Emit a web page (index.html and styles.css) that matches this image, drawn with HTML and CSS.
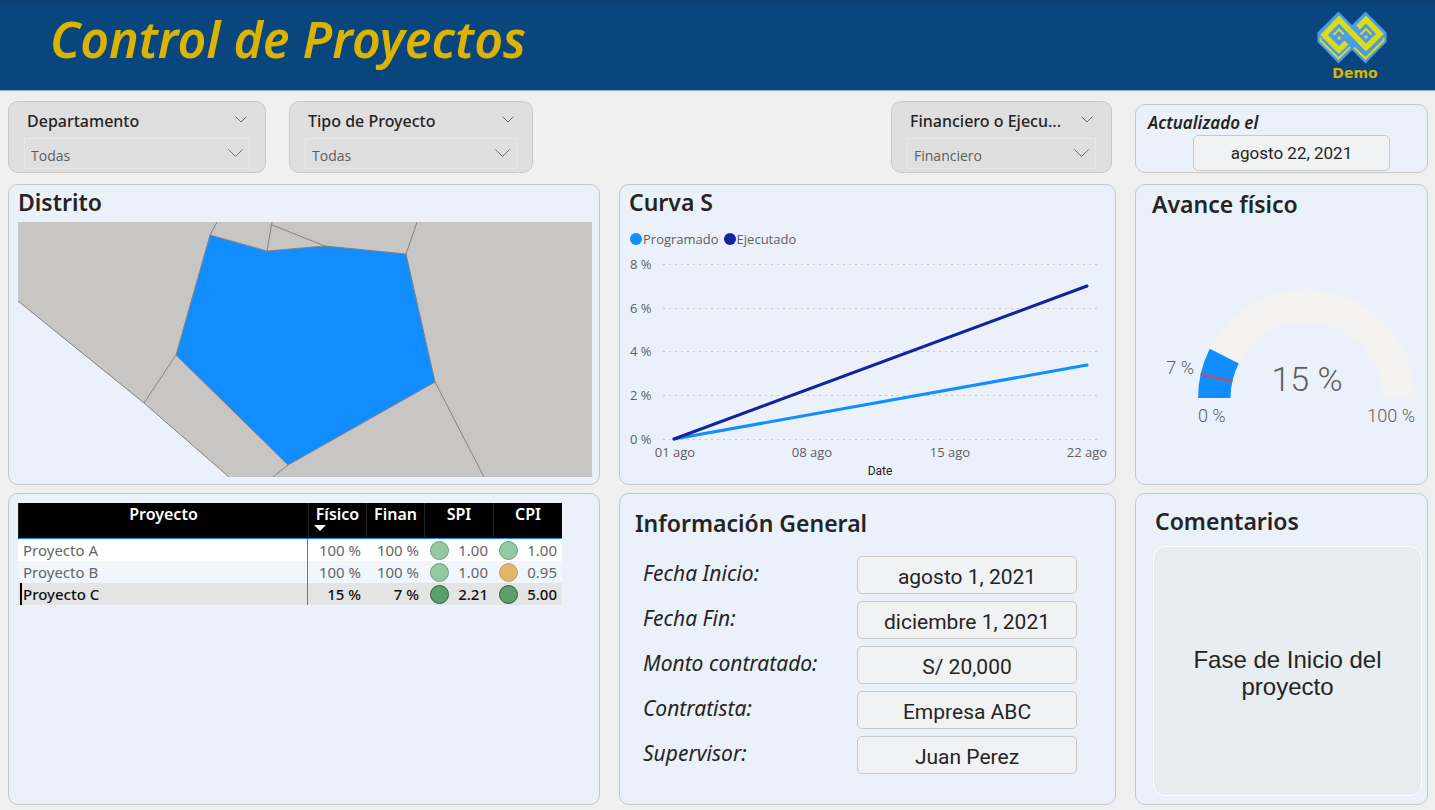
FILE: index.html
```html
<!DOCTYPE html>
<html lang="es">
<head>
<meta charset="utf-8">
<meta name="viewport" content="width=device-width, initial-scale=1">
<title>Control de Proyectos</title>
<link rel="stylesheet" href="styles.css">
</head>
<body>
<header class="topbar">
  <h1 class="topbar-title">Control de Proyectos</h1>
  <div class="brand">
    <svg class="brand-logo" width="70" height="53" viewBox="5 4 70 53" aria-hidden="true">
      <path d="M26.500 4.500 40 18 53.500 4.500 74.500 25.500V35L53.500 56.500 40 43 26.500 56.500 5.500 35V25.500Z" fill="#4a9bea"/>
      <g fill="none" stroke="#dbdc18" stroke-linejoin="miter">
        <path d="M34.500 35.500 27 43 12 28 27 12.500 54 40.500 68 27 54 12.500 46 20.500" stroke-width="5.500"/>
        <path d="M21.500 28 27 22.500 32 27.500M48.500 27.500 54 22 59.500 27.500" stroke-width="2"/>
        <path d="M8.500 31V33.500L26.500 51.500 38 40M42 40.500 53.500 51.500 71.500 33.500V31" stroke-width="2"/>
      </g>
      <path d="M27 29l2 2-2 2-2-2zM54 28l2 2-2 2-2-2z" fill="#dbdc18"/>
    </svg>
    <span class="brand-name">Demo</span>
  </div>
</header>

<main class="page">
  <section class="filters">
    <div class="slicer">
      <div class="slicer-head">
        <label class="slicer-title" for="departamento">Departamento</label>
        <button class="slicer-toggle" type="button" aria-label="Opciones de Departamento"><svg width="12" height="7" viewBox="0 0 12 7"><path class="chev" d="M.5.500 6 6 11.500.500"/></svg></button>
      </div>
      <div class="slicer-field">
        <select class="slicer-select" id="departamento"><option>Todas</option></select>
        <svg class="slicer-arrow" width="15" height="9" viewBox="0 0 15 9"><path class="chev" d="M.5.500 7.500 7.500 14.500.500"/></svg>
      </div>
    </div>
    <div class="slicer">
      <div class="slicer-head">
        <label class="slicer-title" for="tipo">Tipo de Proyecto</label>
        <button class="slicer-toggle" type="button" aria-label="Opciones de Tipo de Proyecto"><svg width="12" height="7" viewBox="0 0 12 7"><path class="chev" d="M.5.500 6 6 11.500.500"/></svg></button>
      </div>
      <div class="slicer-field">
        <select class="slicer-select" id="tipo"><option>Todas</option></select>
        <svg class="slicer-arrow" width="15" height="9" viewBox="0 0 15 9"><path class="chev" d="M.5.500 7.500 7.500 14.500.500"/></svg>
      </div>
    </div>
    <div class="slicer slicer-last">
      <div class="slicer-head">
        <label class="slicer-title" for="modo">Financiero o Ejecu...</label>
        <button class="slicer-toggle" type="button" aria-label="Opciones de Financiero o Ejecutado"><svg width="12" height="7" viewBox="0 0 12 7"><path class="chev" d="M.5.500 6 6 11.500.500"/></svg></button>
      </div>
      <div class="slicer-field">
        <select class="slicer-select" id="modo"><option>Financiero</option></select>
        <svg class="slicer-arrow" width="15" height="9" viewBox="0 0 15 9"><path class="chev" d="M.5.500 7.500 7.500 14.500.500"/></svg>
      </div>
    </div>
    <div class="updated">
      <span class="updated-label">Actualizado el</span>
      <span class="value updated-value">agosto 22, 2021</span>
    </div>
  </section>

  <section class="board">
    <article class="card map-card">
      <h2 class="card-title">Distrito</h2>
      <svg class="map" viewBox="18 222 574 255" role="img" aria-label="Mapa de distritos">
        <path d="M18 222H592V477H229L144 403 18 301Z" fill="#c8c6c4"/>
        <path d="M210 235 267 251 325 246 406 254 435 382 288 465 176 355Z" fill="#118dff"/>
        <path class="border-line" d="M18 301 144 403 229 477M144 403 176 355 210 235 217 222M210 235 267 251 325 246 406 254 417 222M267 251 272 222M272 225 325 246M406 254 435 382 484 477M435 382 288 465 273 477M288 465 176 355"/>
      </svg>
    </article>

    <article class="card chart-card">
      <h2 class="card-title">Curva S</h2>
      <ul class="legend">
        <li class="legend-item"><span class="dot dot-plan"></span>Programado</li>
        <li class="legend-item"><span class="dot dot-real"></span>Ejecutado</li>
      </ul>
      <svg class="chart" viewBox="0 0 495 228" role="img" aria-label="Curva S">
        <path class="grid-line" d="M43 12.500H478M43 56.500H478M43 99.500H478M43 143.500H478M43 187.500H478"/>
        <path d="M54 187 467 113" class="series series-plan"/>
        <path d="M54 187 467 34" class="series series-real"/>
        <g class="tick">
          <text x="10" y="17">8 %</text><text x="10" y="61">6 %</text><text x="10" y="104">4 %</text><text x="10" y="148">2 %</text><text x="10" y="192">0 %</text>
        </g>
        <g class="tick" text-anchor="middle">
          <text x="55" y="205">01 ago</text><text x="192" y="205">08 ago</text><text x="330" y="205">15 ago</text><text x="467" y="205">22 ago</text>
        </g>
        <text class="axis-name" x="260" y="223" text-anchor="middle">Date</text>
      </svg>
    </article>

    <article class="card gauge-card">
      <h2 class="card-title">Avance físico</h2>
      <svg class="gauge" viewBox="0 0 291 250" role="img" aria-label="Avance físico 15 %">
        <path d="M62 164A108.500 108.500 0 0 1 279 164H246.500A76 76 0 0 0 94.500 164Z" fill="#f3f2f1"/>
        <path d="M62 164A108.500 108.500 0 0 1 73.800 114.700L102.800 129.500A76 76 0 0 0 94.500 164Z" fill="#118dff"/>
        <path d="M64.600 140.300 96.300 147.400" stroke="#d64550" stroke-width="2"/>
        <text class="gauge-value" x="171" y="157" text-anchor="middle">15 %</text>
        <text class="gauge-label" x="58" y="140" text-anchor="end">7 %</text>
        <text class="gauge-label" x="62" y="188">0 %</text>
        <text class="gauge-label" x="279" y="188" text-anchor="end">100 %</text>
      </svg>
    </article>

    <article class="card table-card">
      <table class="projects">
        <colgroup><col class="col-name"><col class="col-pct"><col class="col-pct"><col class="col-idx"><col class="col-idx"></colgroup>
        <thead>
          <tr><th>Proyecto</th><th>Físico<span class="sort-mark"></span></th><th>Finan</th><th>SPI</th><th>CPI</th></tr>
        </thead>
        <tbody>
          <tr><td>Proyecto A</td><td>100 %</td><td>100 %</td><td><span class="kpi"><i class="light light-green"></i>1.00</span></td><td><span class="kpi"><i class="light light-green"></i>1.00</span></td></tr>
          <tr><td>Proyecto B</td><td>100 %</td><td>100 %</td><td><span class="kpi"><i class="light light-green"></i>1.00</span></td><td><span class="kpi"><i class="light light-amber"></i>0.95</span></td></tr>
          <tr class="selected"><td>Proyecto C</td><td>15 %</td><td>7 %</td><td><span class="kpi"><i class="light light-strong"></i>2.21</span></td><td><span class="kpi"><i class="light light-strong"></i>5.00</span></td></tr>
        </tbody>
      </table>
    </article>

    <article class="card info-card">
      <h2 class="card-title">Información General</h2>
      <dl class="info">
        <dt>Fecha Inicio:</dt><dd class="value">agosto 1, 2021</dd>
        <dt>Fecha Fin:</dt><dd class="value">diciembre 1, 2021</dd>
        <dt>Monto contratado:</dt><dd class="value">S/ 20,000</dd>
        <dt>Contratista:</dt><dd class="value">Empresa ABC</dd>
        <dt>Supervisor:</dt><dd class="value">Juan Perez</dd>
      </dl>
    </article>

    <article class="card notes-card">
      <h2 class="card-title">Comentarios</h2>
      <p class="note">Fase de Inicio del proyecto</p>
    </article>
  </section>
</main>
</body>
</html>
```

FILE: styles.css
```css
* { box-sizing: border-box; }

body {
  margin: 0;
  min-height: 100vh;
  display: flex;
  flex-direction: column;
  background: #f0f0f0;
  color: #252423;
  font-family: "Noto Sans", "Open Sans", sans-serif;
}

h1, h2, p, ul, dl, dd { margin: 0; padding: 0; }

.topbar {
  display: flex;
  justify-content: space-between;
  align-items: flex-start;
  height: 91px;
  padding: 11px 48px 0 50px;
  background: linear-gradient(#083f70, #09467e 6px);
  border-bottom: 1px solid #94aecb;
}
.topbar-title {
  color: #dbb300;
  font-size: 50px;
  line-height: 56px;
  font-weight: 600;
  font-style: italic;
}
.brand { display: flex; flex-direction: column; align-items: center; }
.brand-logo { display: block; }
.brand-name {
  color: #dbb300;
  font: bold 14px/18px "DejaVu Sans", sans-serif;
  margin-left: 6px;
}

.page { flex: 1; display: flex; flex-direction: column; padding: 10px 7px 5px 8px; }

.filters {
  display: grid;
  grid-template-columns: 258fr 244fr 312fr 221fr 293fr;
  column-gap: 23px;
  align-items: end;
  margin-bottom: 11px;
}
.slicer {
  min-width: 0;
  height: 72px;
  padding: 9px 15px 5px;
  background: #dfdfdf;
  border: 1px solid #c8c8c8;
  border-radius: 10px;
}
.slicer-last { grid-column: 4; }
.slicer-head { display: flex; justify-content: space-between; padding: 0 3px; }
.slicer-title { font-size: 16px; line-height: 21px; font-weight: 500; white-space: nowrap; }
.slicer-toggle {
  display: flex;
  align-items: center;
  height: 17px;
  padding: 0;
  border: 0;
  background: none;
}
.chev { fill: none; stroke: #6b6b6b; }
.slicer-field {
  display: flex;
  align-items: center;
  height: 31px;
  margin-top: 6px;
  padding: 0 6px;
  border: 1px solid #e8e8e8;
}
.slicer-select {
  appearance: none;
  flex: 1;
  min-width: 0;
  padding: 4px 0 0;
  border: 0;
  background: none;
  color: #605e5c;
  font: 14px/20px "Open Sans", sans-serif;
}
.slicer-arrow { flex: none; }

.card, .updated {
  min-width: 0;
  background: #eaf1fa;
  border: 1px solid #c8c8c8;
  border-radius: 10px;
}
.updated { height: 69px; padding: 5px 37px 0 12px; display: flex; flex-direction: column; }
.updated-label { font-size: 17px; line-height: 25px; font-weight: 600; font-style: italic; }
.value {
  display: flex;
  align-items: center;
  justify-content: center;
  background: #f1f2f4;
  border: 1px solid #c8c8c8;
  border-radius: 5px;
  font-family: Roboto, sans-serif;
  white-space: nowrap;
}
.updated-value { height: 36px; margin-left: 45px; font-size: 17px; }

.board {
  flex: 1;
  display: grid;
  grid-template-columns: 592fr 497fr 293fr;
  grid-template-rows: 301fr 312fr;
  column-gap: 19px;
  row-gap: 8px;
}
.card-title { font-size: 23px; line-height: 30px; font-weight: 600; }

.map-card { padding: 2px 7px 7px 9px; }
.map { display: block; width: 100%; margin-top: 5px; }
.border-line { fill: none; stroke: #858280; }

.chart-card { padding-top: 2px; }
.chart-card .card-title { padding-left: 9px; }
.legend {
  display: flex;
  gap: 5px;
  padding: 12px 0 0 10px;
  list-style: none;
  color: #605e5c;
  font: 13px/20px "Open Sans", sans-serif;
}
.legend-item { display: flex; align-items: center; gap: 1px; }
.dot { width: 12px; height: 12px; border-radius: 50%; }
.dot-plan { background: #118dff; }
.dot-real { background: #12239e; }
.chart { display: block; width: 100%; margin-top: 3px; }
.grid-line { fill: none; stroke: #c8c6c4; stroke-width: 1; stroke-dasharray: 2 4; }
.series { fill: none; stroke-width: 3; stroke-linecap: round; }
.series-plan { stroke: #118dff; }
.series-real { stroke: #12239e; }
.tick { fill: #605e5c; font: 13px "Open Sans", sans-serif; }
.axis-name { fill: #252423; font: 12px Roboto, sans-serif; }

.gauge-card { padding-top: 4px; }
.gauge-card .card-title { padding-left: 16px; }
.gauge { display: block; width: 100%; margin-top: 15px; }
.gauge-value { fill: #605e5c; font: 300 34px Roboto, sans-serif; }
.gauge-label { fill: #605e5c; font: 300 18px Roboto, sans-serif; }

.table-card { padding: 9px 37px 9px 9px; }
.projects { width: 100%; table-layout: fixed; border-collapse: separate; border-spacing: 0; font-size: 15px; }
.col-pct { width: 58px; }
.col-idx { width: 69px; }
.projects th {
  height: 36px;
  padding: 0;
  vertical-align: top;
  background: #000;
  color: #fff;
  border-bottom: 1px solid #118dff;
  border-left: 1px solid #222;
  font-size: 16px;
  line-height: 22px;
  font-weight: 600;
}
.sort-mark {
  display: block;
  width: 0;
  margin-left: 5px;
  border: 6px solid transparent;
  border-top-color: #fff;
}
.projects td {
  height: 22px;
  padding: 0 5px 0 0;
  text-align: right;
  line-height: 21px;
  color: #666;
}
.projects td:first-child {
  padding-left: 5px;
  text-align: left;
  border-right: 1px solid #118dff;
}
.projects tbody tr { background: #fff; }
.projects tbody tr:nth-child(2) { background: #f0f6fb; }
.projects tbody .selected { background: #e4e4e4; }
.projects .selected td { color: #111; font-weight: 500; }
.projects .selected td:first-child { box-shadow: inset 2px 0 #e4e4e4, inset 4px 0 #000; }
.kpi { display: flex; justify-content: space-between; align-items: center; padding-left: 6px; }
.light { width: 19px; height: 19px; border-radius: 50%; border: 1px solid; }
.light-green { background: #93c9a2; border-color: #739c7f; }
.light-amber { background: #e3b56b; border-color: #c79f60; }
.light-strong { background: #5b9f6d; border-color: #2f5a3b; }

.info-card { padding: 14px 38px 10px 15px; }
.info {
  display: grid;
  grid-template-columns: 1fr 220px;
  row-gap: 7px;
  margin-top: 18px;
  padding-left: 8px;
}
.info dt { font-size: 21px; line-height: 34px; font-style: italic; white-space: nowrap; }
.info .value { height: 38px; padding-top: 3px; font-size: 21px; }

.notes-card { display: flex; flex-direction: column; padding: 12px 5px 8px 17px; }
.notes-card .card-title { padding-left: 2px; }
.note {
  flex: 1;
  display: flex;
  align-items: center;
  justify-content: center;
  margin-top: 10px;
  padding: 4px 24px 0;
  text-align: center;
  background: #e8edf1;
  border: 1px solid #fff;
  border-radius: 12px;
  font: 24px/27px "Liberation Sans", Arial, sans-serif;
}
```
